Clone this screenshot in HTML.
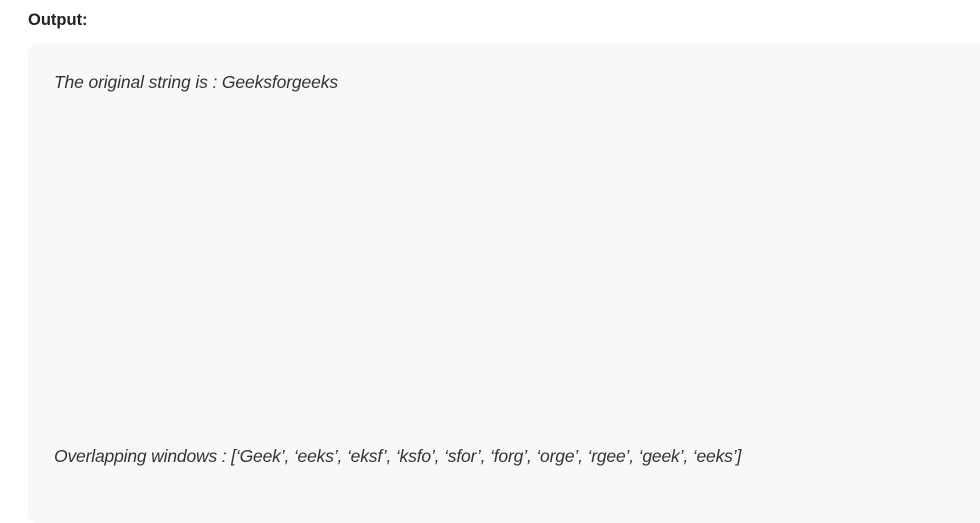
<!DOCTYPE html>
<html><head><style>
html,body{margin:0;padding:0;background:#fff;width:980px;height:495px;overflow:hidden;font-family:"Liberation Sans",sans-serif;}
.h{position:absolute;left:28px;top:11px;font-weight:bold;font-size:16.5px;color:#222;}
.box{position:absolute;left:28px;top:43px;width:980px;height:480px;background:#f8f8f8;border-radius:10px;}
.t{position:absolute;left:54px;font-style:italic;font-size:17.5px;color:#333;white-space:nowrap;}
</style></head><body>
<div class="h">Output:</div>
<div class="box"></div>
<div class="t" style="top:72px;letter-spacing:-0.13px">The original string is : Geeksforgeeks</div>
<div class="t" style="top:446px;letter-spacing:-0.17px">Overlapping windows : [‘Geek’, ‘eeks’, ‘eksf’, ‘ksfo’, ‘sfor’, ‘forg’, ‘orge’, ‘rgee’, ‘geek’, ‘eeks’]</div>
</body></html>
